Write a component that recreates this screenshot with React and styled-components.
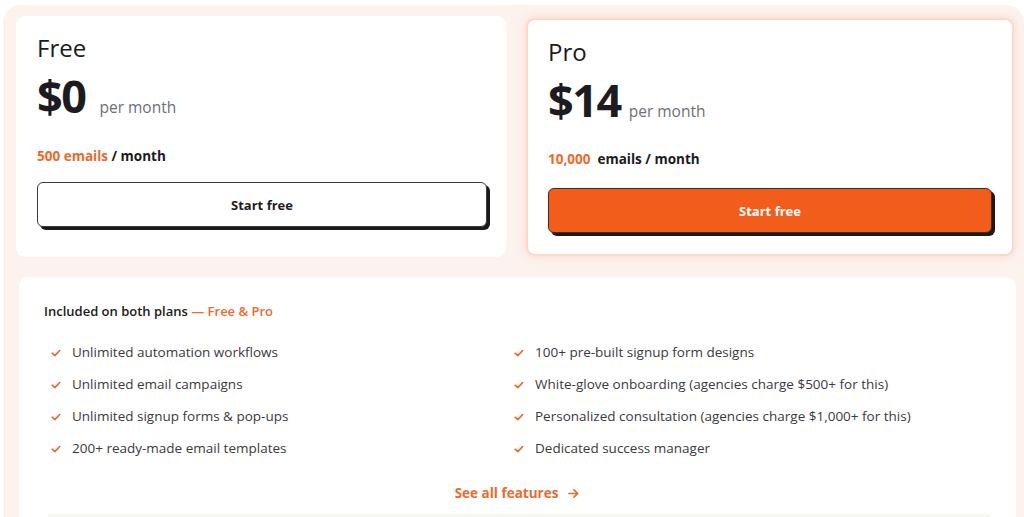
import React from "react";
import styled, { createGlobalStyle } from "styled-components";

const GlobalStyle = createGlobalStyle`
  html, body {
    margin: 0;
    padding: 0;
    background: #ffffff;
    font-family: "Open Sans", "Liberation Sans", sans-serif;
    color: #1d1d22;
  }
  * { box-sizing: border-box; }
`;

const ORANGE = "#f25d1c";
const ORANGE_TEXT = "#ec6a2c";

const plans = [
  { name: "Free", price: "$0", quota: "500 emails", rest: " / month", featured: false },
  { name: "Pro", price: "$14", quota: "10,000", rest: "emails / month", featured: true },
];

const leftFeatures = [
  "Unlimited automation workflows",
  "Unlimited email campaigns",
  "Unlimited signup forms & pop-ups",
  "200+ ready-made email templates",
];

const rightFeatures = [
  "100+ pre-built signup form designs",
  "White-glove onboarding (agencies charge $500+ for this)",
  "Personalized consultation (agencies charge $1,000+ for this)",
  "Dedicated success manager",
];

function Check() {
  return (
    <CheckIcon viewBox="0 0 12 12" width="12" height="12">
      <path d="M2.2 6.2 L4.8 8.6 L9.6 3.6" fill="none" stroke={ORANGE_TEXT} strokeWidth="1.6" strokeLinecap="round" strokeLinejoin="round" />
    </CheckIcon>
  );
}

function PlanCard({ plan }) {
  return (
    <Card $featured={plan.featured}>
      <PlanName>{plan.name}</PlanName>
      <PriceRow $featured={plan.featured}>
        <Price>{plan.price}</Price>
        <Per>per month</Per>
      </PriceRow>
      <Quota $featured={plan.featured}>
        <span className="hl">{plan.quota}</span>
        {plan.featured ? "\u00a0 " : ""}
        {plan.rest}
      </Quota>
      <StartButton $featured={plan.featured}>Start free</StartButton>
    </Card>
  );
}

export default function App() {
  return (
    <>
      <GlobalStyle />
      <Wrapper>
        <PlanGrid>
          {plans.map((p) => (
            <PlanCard key={p.name} plan={p} />
          ))}
        </PlanGrid>
        <Included>
          <IncludedTitle>
            Included on both plans <span>— Free &amp; Pro</span>
          </IncludedTitle>
          <FeatureGrid>
            <FeatureList>
              {leftFeatures.map((f) => (
                <Feature key={f}>
                  <Check />
                  {f}
                </Feature>
              ))}
            </FeatureList>
            <FeatureList>
              {rightFeatures.map((f) => (
                <Feature key={f}>
                  <Check />
                  {f}
                </Feature>
              ))}
            </FeatureList>
          </FeatureGrid>
          <SeeAll>
            See all features
            <svg viewBox="0 0 14 14" width="13" height="13">
              <path d="M2 7 H11.5 M7.5 3 L11.5 7 L7.5 11" fill="none" stroke={ORANGE_TEXT} strokeWidth="1.8" strokeLinecap="round" strokeLinejoin="round" />
            </svg>
          </SeeAll>
          <BottomStrip />
        </Included>
      </Wrapper>
    </>
  );
}

/****************** styles ******************/

const Wrapper = styled.div`
  margin: 5px 0 0 3px;
  padding: 11px 8px 0 13px;
  height: 512px;
  background: #fcf2ee;
  border-radius: 18px 18px 0 0;
  overflow: hidden;
`;

const PlanGrid = styled.div`
  display: grid;
  grid-template-columns: 490px 488px;
  column-gap: 20px;
  align-items: start;
`;

const Card = styled.div`
  background: #fff;
  border-radius: 9px;
  height: ${(p) => (p.$featured ? "238px" : "241px")};
  margin-top: ${(p) => (p.$featured ? "2px" : "0")};
  padding: ${(p) => (p.$featured ? "17px 20px 0 20px" : "17px 19px 0 21px")};
  border: ${(p) => (p.$featured ? "2px solid #fbd9cb" : "none")};
  box-shadow: ${(p) => (p.$featured ? "0 0 8px rgba(247, 160, 125, 0.35)" : "none")};
`;

const PlanName = styled.div`
  font-size: 24px;
  font-weight: 500;
  line-height: 30px;
  color: #1b1b20;
`;

const PriceRow = styled.div`
  display: flex;
  align-items: baseline;
  gap: ${(p) => (p.$featured ? "8px" : "14px")};
  margin-top: 8px;
`;

const Price = styled.div`
  font-size: 45px;
  font-weight: 700;
  line-height: 50px;
  letter-spacing: -1.5px;
  color: #1b1b20;
`;

const Per = styled.div`
  font-size: 15.5px;
  color: #6f6f73;
`;

const Quota = styled.div`
  margin-top: ${(p) => (p.$featured ? "25px" : "26px")};
  font-size: 13.5px;
  font-weight: 700;
  color: #1b1b20;
  .hl {
    color: ${ORANGE_TEXT};
  }
`;

const StartButton = styled.button`
  display: block;
  width: 100%;
  height: 45px;
  margin-top: ${(p) => (p.$featured ? "20px" : "17px")};
  border-radius: 6px;
  border: 1px solid ${(p) => (p.$featured ? "#4a2a1c" : "#3a3a3a")};
  background: ${(p) => (p.$featured ? ORANGE : "#fff")};
  color: ${(p) => (p.$featured ? "#fff" : "#1d1d22")};
  box-shadow: 3px 3px 0 #1a1a1a;
  font-family: inherit;
  font-size: 13px;
  font-weight: 700;
  cursor: pointer;
`;

const Included = styled.div`
  margin-top: 20px;
  margin-left: 3px;
  width: 997px;
  background: #fff;
  border-radius: 9px 9px 0 0;
  padding: 25px 0 0 25px;
  height: 260px;
`;

const IncludedTitle = styled.div`
  font-size: 13px;
  font-weight: 600;
  color: #1b1b20;
  span {
    color: ${ORANGE_TEXT};
  }
`;

const FeatureGrid = styled.div`
  display: grid;
  grid-template-columns: 463px 1fr;
  margin-top: 23px;
  padding-left: 6px;
`;

const FeatureList = styled.div`
  display: flex;
  flex-direction: column;
  gap: 13px;
`;

const Feature = styled.div`
  display: flex;
  align-items: center;
  gap: 10px;
  font-size: 13.5px;
  line-height: 19px;
  color: #3a3a40;
`;

const CheckIcon = styled.svg`
  flex: none;
`;

const SeeAll = styled.div`
  display: flex;
  justify-content: center;
  align-items: center;
  gap: 9px;
  margin-top: 26px;
  margin-left: -25px;
  font-size: 13.5px;
  font-weight: 700;
  color: ${ORANGE_TEXT};
`;

const BottomStrip = styled.div`
  margin: 12px 0 0 4px;
  width: 942px;
  height: 6px;
  background: #f6f7f0;
`;
